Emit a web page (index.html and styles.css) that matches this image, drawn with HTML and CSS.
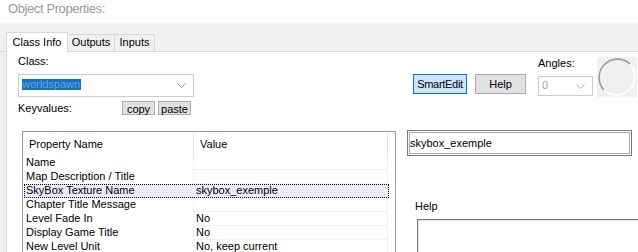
FILE: index.html
```html
<!DOCTYPE html>
<html>
<head>
    <title>Object Properties</title>
    <link rel="stylesheet" href="styles.css">
</head>
<body>
    <div class="titlebar">Object Properties:</div>

    <div class="tabs">
        <div class="tab active">Class Info</div>
        <div class="tab outputs">Outputs</div>
        <div class="tab inputs">Inputs</div>
    </div>

    <div class="panel">
        <div class="left">
            <div class="label">Class:</div>
            <div class="combo class-combo">
                <span class="sel">worldspawn</span>
                <svg class="chev" width="9" height="5" viewBox="0 0 9 5"><polyline points="0.5,0.5 4.5,4.5 8.5,0.5" fill="none" stroke="#a0a0a0" stroke-width="1"/></svg>
            </div>
            <div class="kv-row">
                <span class="kv-label">Keyvalues:</span>
                <button class="mini">copy</button>
                <button class="mini">paste</button>
            </div>

            <div class="list">
                <div class="row head">
                    <div class="cell name">Property Name</div>
                    <div class="cell value">Value</div>
                </div>
                <div class="row">
                    <div class="cell name">Name</div>
                    <div class="cell value"></div>
                </div>
                <div class="row">
                    <div class="cell name">Map Description / Title</div>
                    <div class="cell value"></div>
                </div>
                <div class="row selected">
                    <div class="cell name">SkyBox Texture Name</div>
                    <div class="cell value">skybox_exemple</div>
                </div>
                <div class="row">
                    <div class="cell name">Chapter Title Message</div>
                    <div class="cell value"></div>
                </div>
                <div class="row">
                    <div class="cell name">Level Fade In</div>
                    <div class="cell value">No</div>
                </div>
                <div class="row">
                    <div class="cell name">Display Game Title</div>
                    <div class="cell value">No</div>
                </div>
                <div class="row">
                    <div class="cell name">New Level Unit</div>
                    <div class="cell value">No, keep current</div>
                </div>
            </div>
        </div>

        <div class="right">
            <div class="top-row">
                <button class="btn smart">SmartEdit</button>
                <button class="btn help">Help</button>
                <div class="angles">
                    <div class="label">Angles:</div>
                    <div class="combo angle-combo">
                        <span class="dim">0</span>
                        <svg class="chev" width="9" height="5" viewBox="0 0 9 5"><polyline points="0.5,0.5 4.5,4.5 8.5,0.5" fill="none" stroke="#b4b4b4" stroke-width="1"/></svg>
                    </div>
                </div>
                <div class="dial">
                    <svg width="40" height="40" viewBox="0 0 40 40">
                        <path d="M33 7 A18.4 18.4 0 0 0 7 33" fill="none" stroke="#9a9a9a" stroke-width="1.6"/>
                        <path d="M7 33 A18.4 18.4 0 0 0 33 7" fill="none" stroke="#ffffff" stroke-width="1.6"/>
                        <circle cx="20" cy="20" r="0.8" fill="#ffffff"/>
                    </svg>
                </div>
            </div>

            <div class="textbox">skybox_exemple</div>

            <div class="help-label">Help</div>
            <div class="help-box"></div>
        </div>
    </div>
</body>
</html>
```

FILE: styles.css
```css
body {
    font-family: "Liberation Sans", Arial, sans-serif;
    font-size: 11px;
    line-height: 13px;
    color: #000;
    background-color: #f0f0f0;
    margin: 0;
    padding: 0;
    width: 638px;
    height: 252px;
    overflow: hidden;
}
.titlebar {
    height: 23px;
    box-sizing: border-box;
    padding: 1px 0 0 8px;
    background-color: #ffffff;
    color: #9b9b9b;
    font-size: 13px;
    line-height: 16px;
    letter-spacing: -0.4px;
}
.tabs {
    display: flex;
    align-items: flex-end;
    height: 29px;
    box-sizing: border-box;
    padding-left: 6px;
    border-bottom: 1px solid #d9d9d9;
}
.tab {
    box-sizing: border-box;
    height: 17px;
    padding-top: 1px;
    text-align: center;
    border: 1px solid #d9d9d9;
    border-bottom: none;
    background-color: #f0f0f0;
    margin-left: -1px;
}
.tab.active {
    height: 20px;
    width: 62px;
    padding-top: 3px;
    margin-left: 0;
    margin-bottom: -1px;
    background-color: #ffffff;
    position: relative;
}
.tab.outputs {
    width: 48px;
}
.tab.inputs {
    width: 41px;
}
.panel {
    display: flex;
    margin-left: 6px;
    height: 200px;
    background-color: #ffffff;
    border-left: 1px solid #d9d9d9;
}
.left {
    width: 389px;
    flex-shrink: 0;
    box-sizing: border-box;
    padding: 3px 0 0 11px;
}
.label {
    height: 13px;
}
.combo {
    position: relative;
    box-sizing: border-box;
    border: 1px solid #cccccc;
    background-color: #ffffff;
}
.class-combo {
    width: 176px;
    height: 23px;
    margin-top: 6px;
    padding: 3px 0 0 3px;
}
.sel {
    display: inline-block;
    line-height: 11px;
    height: 11px;
    padding-right: 1px;
    background-color: #0a74d0;
    color: #7f9cbd;
}
.chev {
    position: absolute;
    right: 7px;
    top: 8px;
}
.kv-row {
    display: flex;
    align-items: flex-start;
    height: 14px;
    margin-top: 4px;
    line-height: 14px;
}
.kv-label {
    width: 104px;
}
.mini {
    font-family: "Liberation Sans", Arial, sans-serif;
    font-size: 11px;
    line-height: 12px;
    height: 14px;
    width: 33px;
    margin: 0 3px 0 0;
    padding: 1px 0 0 0;
    border: 1px solid #adadad;
    background-color: #e1e1e1;
    color: #000;
}
.list {
    margin: 16px 0 0 4px;
    width: 374px;
    height: 130px;
    box-sizing: border-box;
    border: 1px solid #999999;
    border-right-color: #a0a0a0;
}
.row {
    display: flex;
    width: 365px;
    height: 14px;
}
.cell {
    box-sizing: border-box;
    white-space: nowrap;
    overflow: hidden;
}
.cell.name {
    width: 170px;
    padding-left: 3px;
}
.cell.value {
    width: 195px;
    padding-left: 2px;
    border-left: 1px solid #efefef;
    border-right: 1px solid #efefef;
    border-bottom: 1px solid #efefef;
}
.row.head {
    height: 24px;
}
.row.head .cell {
    padding-top: 6px;
}
.row.head .cell.name {
    padding-left: 6px;
}
.row.head .cell.value {
    padding-left: 6px;
    border-left-color: #e5e5e5;
    border-right-color: #e5e5e5;
    border-bottom: none;
}
.row.selected {
    width: 365px;
    margin-left: 1px;
    background-color: #ebebfb;
    outline: 1px dotted #000000;
    outline-offset: -1px;
}
.row.selected .cell.name {
    width: 169px;
    padding-left: 2px;
}
.row.selected .cell.value {
    border-color: transparent;
}
.right {
    flex: 1;
    padding-top: 5px;
}
.top-row {
    display: flex;
    align-items: flex-start;
    padding-left: 17px;
    height: 40px;
}
.btn {
    font-family: "Liberation Sans", Arial, sans-serif;
    font-size: 11px;
    height: 20px;
    margin-top: 17px;
    padding: 0;
    color: #000;
}
.btn.smart {
    width: 54px;
    border: 1px solid #0078d7;
    background-color: #cce4f7;
    letter-spacing: -0.3px;
}
.btn.help {
    width: 51px;
    margin-left: 8px;
    border: 1px solid #adadad;
    background-color: #e1e1e1;
}
.angles {
    margin-left: 12px;
}
.angle-combo {
    width: 55px;
    height: 20px;
    margin-top: 6px;
    padding: 2px 0 0 3px;
}
.angle-combo .chev {
    top: 7px;
}
.dim {
    color: #a0a0a0;
}
.dial {
    width: 40px;
    height: 40px;
    margin-left: 4px;
    background-color: #f0f0f0;
}
.dial svg {
    display: block;
}
.textbox {
    margin: 33px 0 0 11px;
    width: 225px;
    height: 26px;
    box-sizing: border-box;
    padding: 6px 0 0 2px;
    border: 1px solid #7a7a7a;
    box-shadow: inset 0 0 0 1px #ffffff, inset 0 0 0 2px #a8a8a8;
}
.help-label {
    margin: 44px 0 0 19px;
}
.help-box {
    margin: 6px 0 0 21px;
    width: 240px;
    height: 60px;
    border: 1px solid #7a7a7a;
    box-shadow: inset 0 0 0 1px #e3e3e3;
}
```
